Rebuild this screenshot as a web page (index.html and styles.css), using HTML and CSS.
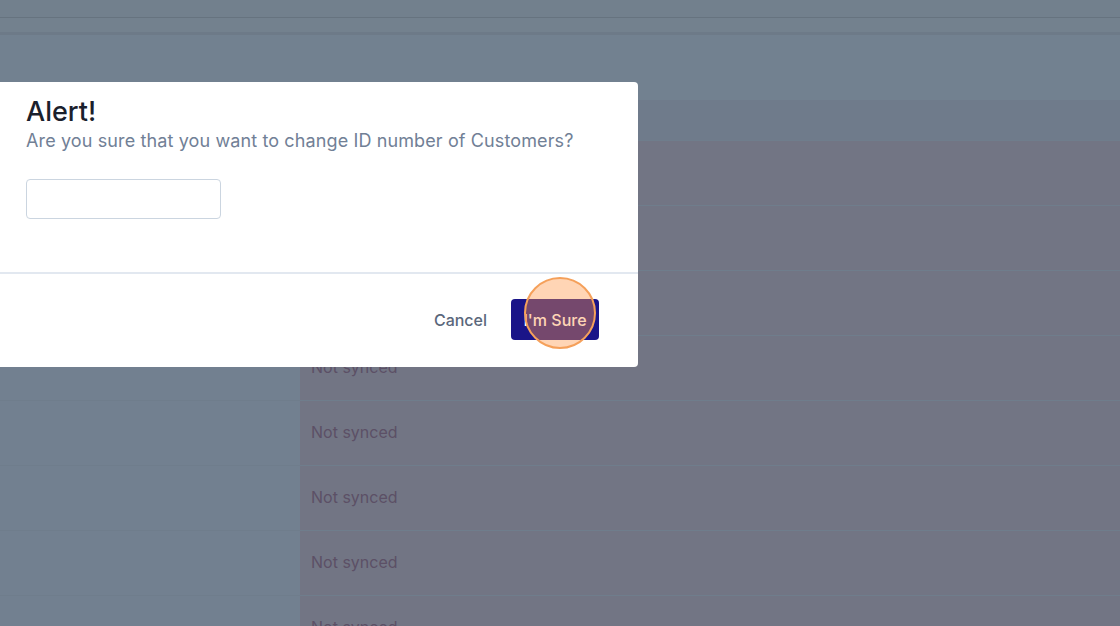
FILE: index.html
```html
<!DOCTYPE html>
<html lang="en">
<head>
<meta charset="utf-8">
<title>Alert</title>
<link rel="stylesheet" href="styles.css">
</head>
<body>
<div class="page">
  <div class="topbar"></div>
  <div class="subbar"></div>
  <div class="toolbar"></div>
  <div class="thead"></div>
  <div class="rows">
    <div class="row"><div class="cell-left"></div><div class="cell-right">Not synced</div></div>
    <div class="row"><div class="cell-left"></div><div class="cell-right">Not synced</div></div>
    <div class="row"><div class="cell-left"></div><div class="cell-right">Not synced</div></div>
    <div class="row"><div class="cell-left"></div><div class="cell-right">Not synced</div></div>
    <div class="row"><div class="cell-left"></div><div class="cell-right">Not synced</div></div>
    <div class="row"><div class="cell-left"></div><div class="cell-right">Not synced</div></div>
    <div class="row"><div class="cell-left"></div><div class="cell-right">Not synced</div></div>
    <div class="row"><div class="cell-left"></div><div class="cell-right">Not synced</div></div>
  </div>
</div>

<div class="modal">
  <div class="modal-body">
    <h1 class="modal-title">Alert!</h1>
    <p class="modal-text">Are you sure that you want to change ID number of Customers?</p>
    <input class="modal-input" type="text">
  </div>
  <div class="modal-footer">
    <button class="btn-cancel">Cancel</button>
    <button class="btn-sure">I'm Sure</button>
  </div>
</div>
<div class="click-marker"></div>
</body>
</html>
```

FILE: styles.css
```css
html, body {
  margin: 0;
  padding: 0;
}
body {
  width: 1120px;
  height: 626px;
  overflow: hidden;
  background: #728190;
  font-family: Inter, "Noto Sans", "Liberation Sans", sans-serif;
  position: relative;
}
.page {
  display: flex;
  flex-direction: column;
}
.topbar {
  height: 17px;
  background: #72808d;
  border-bottom: 1px solid #66737f;
}
.subbar {
  height: 14px;
  background: #73818e;
  border-bottom: 3px solid #6d7a88;
}
.toolbar {
  height: 65px;
  background: #728190;
}
.thead {
  height: 40px;
  background: #6f7b8b;
}
.rows {
  display: flex;
  flex-direction: column;
}
.row {
  display: flex;
  height: 64px;
  border-top: 1px solid #6f7d8c;
}
.cell-left {
  width: 300px;
  background: #728090;
}
.cell-right {
  flex: 1;
  background: #727584;
  color: #5c5066;
  font-size: 16px;
  display: flex;
  align-items: center;
  padding-left: 11px;
  padding-bottom: 2px;
}
.modal {
  position: absolute;
  left: 0;
  top: 82px;
  width: 638px;
  height: 285px;
  background: #ffffff;
  border-radius: 0 4px 4px 0;
  display: flex;
  flex-direction: column;
}
.modal-body {
  padding: 13px 26px 0 26px;
  height: 177px;
  border-bottom: 2px solid #e2e8f0;
  display: flex;
  flex-direction: column;
  align-items: flex-start;
}
.modal-title {
  margin: 0;
  font-size: 27px;
  line-height: 34px;
  font-weight: 500;
  color: #1a202c;
}
.modal-text {
  margin: 0;
  font-size: 18px;
  line-height: 24px;
  color: #718096;
  letter-spacing: 0.12px;
}
.modal-input {
  margin-top: 26px;
  width: 195px;
  height: 40px;
  box-sizing: border-box;
  border: 1px solid #cbd5e0;
  border-radius: 4px;
  background: #fff;
  padding: 0 10px;
  font-family: inherit;
  font-size: 16px;
}
.modal-footer {
  flex: 1;
  display: flex;
  justify-content: flex-end;
  align-items: center;
  gap: 24px;
  padding-right: 39px;
  padding-bottom: 2px;
}
.btn-cancel {
  border: none;
  background: none;
  padding: 0;
  font-family: inherit;
  font-size: 16px;
  font-weight: 500;
  color: #5a677b;
}
.btn-sure {
  border: none;
  background: #1a1488;
  color: #ffffff;
  height: 41px;
  width: 88px;
  border-radius: 4px;
  font-family: inherit;
  font-size: 16px;
  font-weight: 500;
}
.click-marker {
  position: absolute;
  left: 524px;
  top: 277px;
  width: 68px;
  height: 68px;
  border-radius: 50%;
  border: 2px solid #f5a05a;
  background: rgba(255, 150, 70, 0.4);
}
```
